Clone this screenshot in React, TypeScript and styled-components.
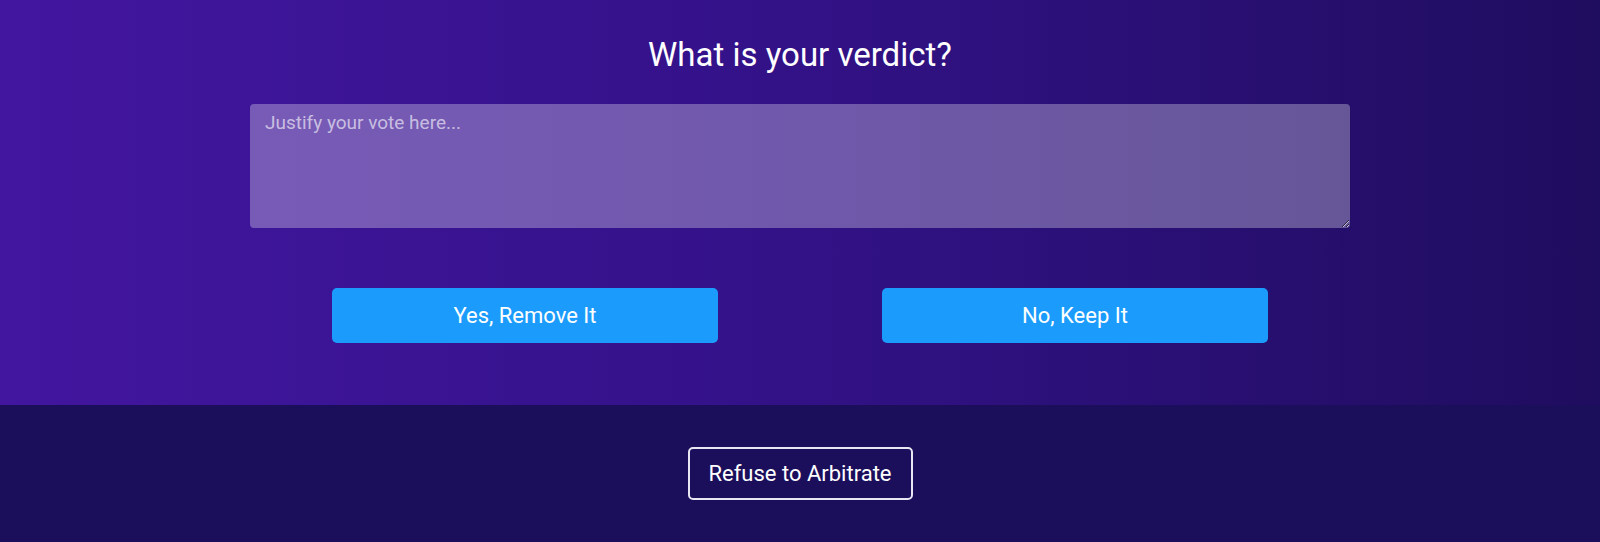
import React from "react";
import styled, { createGlobalStyle } from "styled-components";

const GlobalStyle = createGlobalStyle`
  html, body {
    margin: 0;
    padding: 0;
    background: #1b0f5c;
  }
  body {
    font-family: Roboto, "Liberation Sans", Arial, sans-serif;
    color: #ffffff;
  }
  * { box-sizing: border-box; }
`;

const Page = styled.div`
  display: flex;
  flex-direction: column;
  min-height: 542px;
  background: #1b0f5c;
`;

const VerdictSection = styled.section`
  display: flex;
  flex-direction: column;
  align-items: center;
  padding: 35px 0 62px;
  background: linear-gradient(90deg, #42169f 0%, #34128a 45%, #1f0d5f 100%);
`;

const Heading = styled.h2`
  margin: 0 0 30px;
  font-size: 33px;
  font-weight: 400;
  line-height: 39px;
  color: #ffffff;
`;

const Justification = styled.textarea`
  width: 1100px;
  height: 124px;
  padding: 8px 15px;
  border: none;
  border-radius: 4px;
  background: rgba(255, 255, 255, 0.3);
  color: #ffffff;
  font-family: Roboto, "Liberation Sans", Arial, sans-serif;
  font-size: 19px;
  line-height: 22px;
  resize: vertical;
  outline: none;

  &::placeholder {
    color: rgba(255, 255, 255, 0.62);
  }
`;

const Choices = styled.div`
  display: flex;
  gap: 164px;
  margin-top: 60px;
`;

const ChoiceButton = styled.button`
  width: 386px;
  height: 55px;
  border: none;
  border-radius: 5px;
  background: #1b9cfc;
  color: #ffffff;
  font-family: Roboto, "Liberation Sans", Arial, sans-serif;
  font-size: 22px;
  font-weight: 400;
  cursor: pointer;
`;

const Footer = styled.footer`
  flex: 1;
  display: flex;
  justify-content: center;
  align-items: flex-start;
  padding: 42px 0;
  background: #1b0f5c;
`;

const RefuseButton = styled.button`
  width: 225px;
  height: 53px;
  border: 2px solid #e8e6f2;
  border-radius: 5px;
  background: transparent;
  color: #ffffff;
  font-family: Roboto, "Liberation Sans", Arial, sans-serif;
  font-size: 22px;
  font-weight: 400;
  cursor: pointer;
`;

export default function App() {
  return (
    <>
      <GlobalStyle />
      <Page>
        <VerdictSection>
          <Heading>What is your verdict?</Heading>
          <Justification placeholder="Justify your vote here..." />
          <Choices>
            <ChoiceButton>Yes, Remove It</ChoiceButton>
            <ChoiceButton>No, Keep It</ChoiceButton>
          </Choices>
        </VerdictSection>
        <Footer>
          <RefuseButton>Refuse to Arbitrate</RefuseButton>
        </Footer>
      </Page>
    </>
  );
}
